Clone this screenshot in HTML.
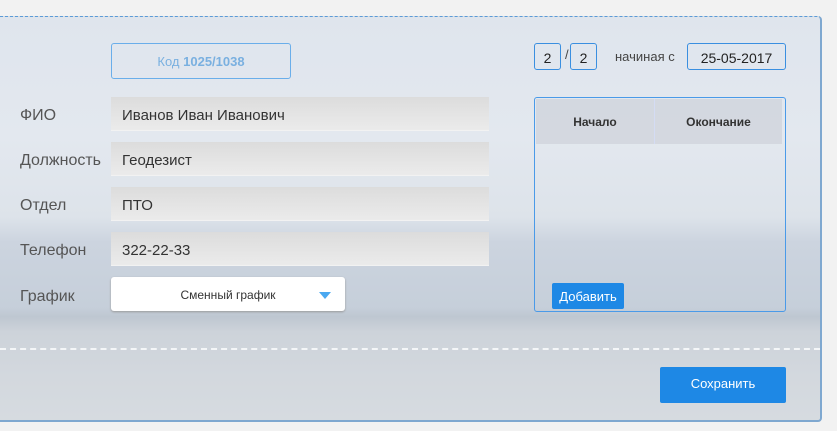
<!DOCTYPE html>
<html><head><meta charset="utf-8"><style>
body{margin:0;width:837px;height:431px;background:#f2f2f2;font-family:"Liberation Sans",sans-serif;position:relative;overflow:hidden}
.panel{position:absolute;left:0;top:16px;width:820px;height:403px;border-top:1px dashed #5a9bd8;border-right:2px solid #7fa8d0;border-bottom:2px solid #7fa8d0;border-radius:0 4px 4px 0;
background:linear-gradient(180deg,#dfe5ed 0px,#e3e8ef 120px,#dde3ea 200px,#ccd4df 225px,#c6cfda 290px,#bec7d1 300px,#cdd3da 315px,#d3d8de 360px,#d6dbe0 403px);overflow:hidden}
.a{position:absolute}
.lbl{position:absolute;left:20px;font-size:16px;color:#555}
.inp{position:absolute;left:111px;width:378px;height:34px;background:linear-gradient(#dcdcdc,#ebebeb);border-bottom:1px solid #f2f2f2;font-size:15px;color:#333;line-height:37px;padding-left:11px;box-sizing:border-box}
.box{position:absolute;border:1px solid #3a8fe0;border-radius:3px;background:transparent;font-size:14px;color:#222;text-align:center;box-sizing:border-box}
</style></head><body>
<div class="panel">
<div class="a" style="left:0;top:331px;width:820px;border-top:2px dashed #f4f6f8"></div>
</div>
<div class="box" style="left:111px;top:43px;width:180px;height:36px;border-color:#6aaeea;line-height:35px;color:#7ab0e0;font-size:13px">Код <b>1025/1038</b></div>
<div class="lbl" style="top:107px">ФИО</div>
<div class="inp" style="top:97px">Иванов Иван Иванович</div>
<div class="lbl" style="top:152px">Должность</div>
<div class="inp" style="top:142px">Геодезист</div>
<div class="lbl" style="top:197px">Отдел</div>
<div class="inp" style="top:187px">ПТО</div>
<div class="lbl" style="top:242px">Телефон</div>
<div class="inp" style="top:232px">322-22-33</div>
<div class="lbl" style="top:288px">График</div>
<div class="a" style="left:111px;top:277px;width:234px;height:34px;background:#fff;border-radius:3px;box-shadow:0 1px 2px #999;font-size:12px;color:#333;text-align:center;line-height:37px">Сменный график
<div class="a" style="right:14px;top:15px;width:0;height:0;border-left:6px solid transparent;border-right:6px solid transparent;border-top:7px solid #4aa8f0"></div></div>
<div class="box" style="left:534px;top:43px;width:27px;height:27px;line-height:28px">2</div>
<div class="a" style="left:565px;top:47px;font-size:13px;color:#444">/</div>
<div class="box" style="left:570px;top:43px;width:27px;height:27px;line-height:28px">2</div>
<div class="a" style="left:615px;top:49px;font-size:13px;color:#444">начиная с</div>
<div class="box" style="left:687px;top:43px;width:99px;height:27px;line-height:28px">25-05-2017</div>
<div class="box" style="left:534px;top:97px;width:252px;height:215px;border-color:#4a9ae8">
<div class="a" style="left:1px;top:1px;width:118px;height:45px;background:rgba(205,210,218,.7);border-right:1px solid #d4dcf4;font-size:12px;font-weight:bold;color:#333;line-height:47px">Начало</div>
<div class="a" style="left:120px;top:1px;width:127px;height:45px;background:rgba(205,210,218,.7);font-size:12px;font-weight:bold;color:#333;line-height:47px">Окончание</div>
<div class="a" style="left:17px;top:185px;width:72px;height:26px;background:#1e88e5;border-radius:2px;color:#fff;font-size:13px;line-height:27px">Добавить</div>
</div>
<div class="a" style="left:660px;top:367px;width:126px;height:36px;background:#1e88e5;border-radius:2px;color:#fff;font-size:13px;text-align:center;line-height:34px">Сохранить</div>
</body></html>
